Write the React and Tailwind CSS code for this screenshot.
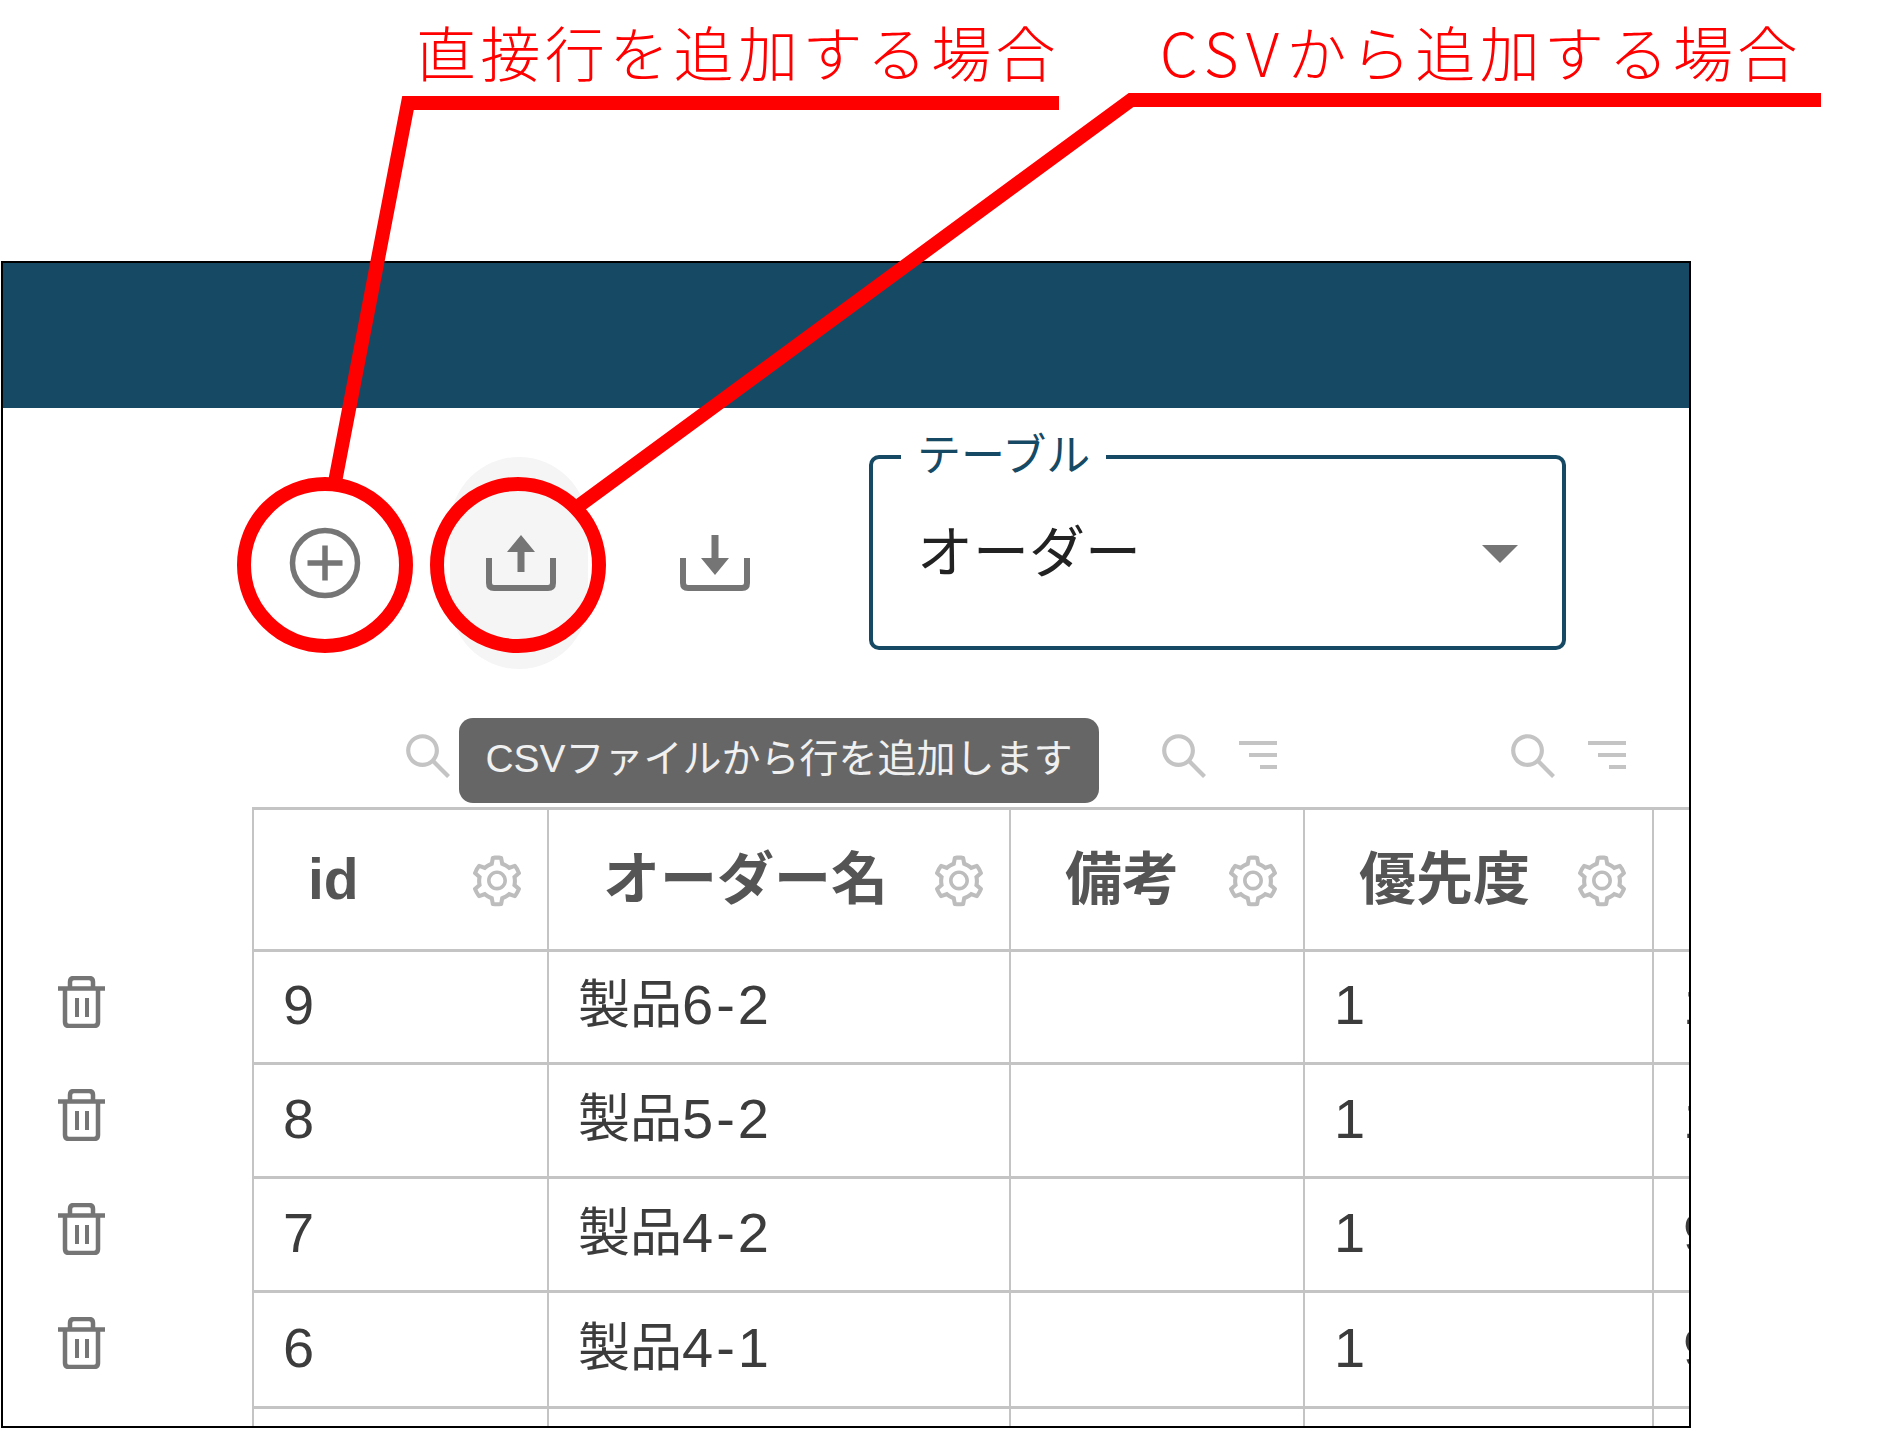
import React from "react";
import { AiOutlineSearch, AiOutlineSetting } from "react-icons/ai";

const SANS = "font-['Liberation_Sans','Noto_Sans_CJK_JP',sans-serif]";
const GRID = "grid grid-cols-[249px_295px_462px_294px_349px_41px]";

function PlusIcon() {
  return (
    <svg width="72" height="72" viewBox="0 0 72 72" fill="none" stroke="#757575">
      <circle cx="36" cy="36" r="32.5" strokeWidth="5.5" />
      <path d="M36 18.5V53.5M18.5 36H53.5" strokeWidth="5.5" />
    </svg>
  );
}

function TrayIcon({ up }) {
  return (
    <svg width="70" height="56" viewBox="0 0 70 56" fill="#757575" stroke="none">
      <path d="M3 23V48Q3 53 8 53H62Q67 53 67 48V23" fill="none" stroke="#757575" strokeWidth="6" />
      {up ? (
        <path d="M35 0L49 17H38.5V37H31.5V17H21Z" />
      ) : (
        <path d="M31.5 0H38.5V23H49L35 40L21 23H31.5Z" />
      )}
    </svg>
  );
}

function FilterIcon() {
  return (
    <svg width="38" height="30" viewBox="0 0 38 30" fill="#c4c4c4">
      <rect x="0" y="0" width="38" height="4" />
      <rect x="10" y="12" width="28" height="4" />
      <rect x="21" y="24" width="17" height="4" />
    </svg>
  );
}

function TrashIcon() {
  return (
    <svg width="47" height="52" viewBox="0 0 47 52" fill="none" stroke="#757575">
      <path d="M12 12V6Q12 2 16 2H31Q35 2 35 6V12" strokeWidth="4.5" />
      <path d="M0 12.5H47" strokeWidth="4.5" />
      <path d="M7 13V46Q7 50 11 50H36Q40 50 40 46V13" strokeWidth="4.5" />
      <path d="M19 22V41M29 22V41" strokeWidth="4" />
    </svg>
  );
}

function FilterCell() {
  return (
    <div className="flex items-center justify-end gap-[27px] pr-[26px] pb-[14px]">
      <AiOutlineSearch className="text-[56px] text-[#c4c4c4]" />
      <FilterIcon />
    </div>
  );
}

function HeadCell({ children }) {
  return (
    <div className="flex items-center justify-between border-t-[3px] border-l-[2px] border-[#c4c4c4] pl-[54px] pr-[21px] h-[142px]">
      <span className="text-[57px] leading-none font-bold text-[#555555]">{children}</span>
      <AiOutlineSetting className="text-[58px] text-[#bdbdbd] shrink-0 mt-[2px]" />
    </div>
  );
}

function BodyCell({ cjk, children }) {
  return (
    <div className="flex items-center border-t-[3px] border-l-[2px] border-[#c4c4c4] pl-[29px] pb-[4px] whitespace-nowrap leading-none text-[#3c3c3c]">
      {cjk && <span className="text-[52px]">{cjk}</span>}
      {children && <span className={`text-[56px] ${cjk ? "tracking-[3px]" : ""}`}>{children}</span>}
    </div>
  );
}

const rows = [
  ["9", "6-2", "1", "1"],
  ["8", "5-2", "1", "1"],
  ["7", "4-2", "1", "9"],
  ["6", "4-1", "1", "9"],
];

export default function App() {
  return (
    <div className={`relative w-[1887px] h-[1430px] bg-white overflow-hidden ${SANS}`}>
      <div className="pt-[261px] pl-[1px]">
        <div className="w-[1690px] h-[1167px] border-2 border-black overflow-hidden">
          <div className="h-[145px] bg-[#164a64]" />

          <div className="flex h-[311px] pt-[49px] pl-[253px]">
            <div className="flex gap-[56px]">
              <button className="w-[138px] h-[212px] rounded-full flex items-center justify-center">
                <PlusIcon />
              </button>
              <button className="w-[138px] h-[212px] rounded-full bg-[#f5f5f5] flex items-center justify-center pl-[4px]">
                <TrayIcon up />
              </button>
              <button className="w-[138px] h-[212px] rounded-full flex items-center justify-center pl-[4px]">
                <TrayIcon />
              </button>
            </div>
            <div className="relative ml-[87px] -mt-[2px] w-[697px] h-[195px] border-[4px] border-[#164a64] rounded-[10px] flex items-center justify-between pl-[44px] pr-[44px]">
              <span className="absolute -top-[33px] left-[28px] bg-white px-[16px] text-[44px] leading-[52px] text-[#164a64] font-['Noto_Sans_CJK_JP',sans-serif]">
                テーブル
              </span>
              <span className="text-[56px] leading-none text-[#222222] -mt-[10px] font-['Noto_Sans_CJK_JP',sans-serif]">オーダー</span>
              <span className="w-0 h-0 mt-[2px] border-x-[18px] border-x-transparent border-t-[18px] border-t-[#757575]" />
            </div>
          </div>

          <div className={`relative ${GRID} h-[88px]`}>
            <div />
            <FilterCell />
            <FilterCell />
            <FilterCell />
            <FilterCell />
            <div className="absolute left-[456px] -top-[1px] w-[640px] h-[85px] rounded-[14px] bg-[#666666] flex items-center justify-center whitespace-nowrap text-[39px] leading-none text-[#f0f0f0] pb-[5px]">
              CSVファイルから行を追加します
            </div>
          </div>

          <div className={`${GRID} grid-rows-[142px_113px_114px_114px_116px_40px]`}>
            <div />
            <HeadCell>id</HeadCell>
            <HeadCell>オーダー名</HeadCell>
            <HeadCell>備考</HeadCell>
            <HeadCell>優先度</HeadCell>
            <div className="border-t-[3px] border-l-[2px] border-[#c4c4c4]" />
            {rows.map((r) => (
              <React.Fragment key={r[0]}>
                <div className="pl-[55px] pt-[27px]">
                  <TrashIcon />
                </div>
                <BodyCell>{r[0]}</BodyCell>
                <BodyCell cjk="製品">{r[1]}</BodyCell>
                <BodyCell />
                <BodyCell>{r[2]}</BodyCell>
                <BodyCell>{r[3]}</BodyCell>
              </React.Fragment>
            ))}
            <div />
            <BodyCell />
            <BodyCell />
            <BodyCell />
            <BodyCell />
            <BodyCell />
          </div>
        </div>
      </div>

      {/* callout annotations */}
      <span className="absolute left-[416px] top-[13px] text-[60px] leading-[76px] tracking-[4.4px] text-[#ff0000] whitespace-nowrap font-light font-['Noto_Sans_CJK_JP',sans-serif]">
        直接行を追加する場合
      </span>
      <span className="absolute left-[1160px] top-[13px] text-[60px] leading-[76px] tracking-[4.4px] text-[#ff0000] whitespace-nowrap font-light font-['Noto_Sans_CJK_JP',sans-serif]">
        <span className="tracking-[7.5px]">CSV</span>から追加する場合
      </span>
      <svg className="absolute left-0 top-0 pointer-events-none" width="1887" height="1430" viewBox="0 0 1887 1430" fill="none" stroke="#ff0000">
        <path d="M1059 103H408L335 482" strokeWidth="14" />
        <path d="M1821 100H1131L580 505" strokeWidth="14" />
        <circle cx="325" cy="565" r="81" strokeWidth="14" />
        <circle cx="518" cy="565" r="81" strokeWidth="14" />
      </svg>
    </div>
  );
}
